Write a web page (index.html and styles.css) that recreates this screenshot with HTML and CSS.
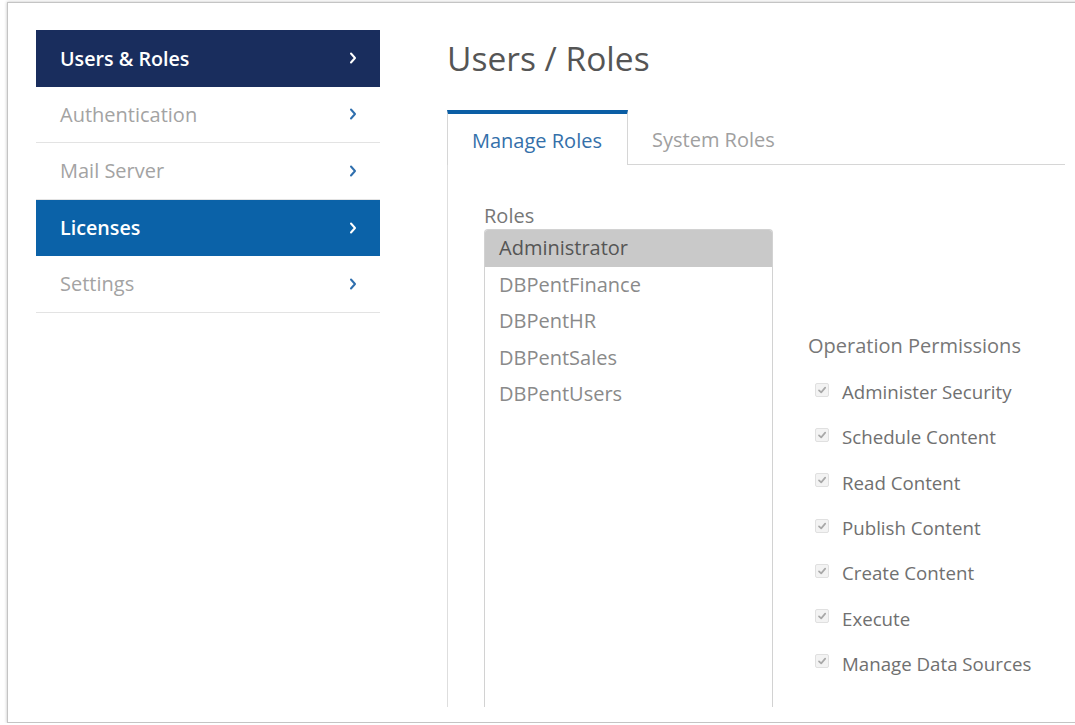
FILE: index.html
```html
<!DOCTYPE html>
<html lang="en">
<head>
<meta charset="utf-8">
<title>Users / Roles</title>
<link rel="stylesheet" href="styles.css">
</head>
<body>
<div class="frame">
  <nav class="sidebar">
    <a class="nav-item nav-dark">Users &amp; Roles<svg class="chev" viewBox="0 0 8 12"><path d="M2 1.5 L6 6 L2 10.5"/></svg></a>
    <a class="nav-item">Authentication<svg class="chev" viewBox="0 0 8 12"><path d="M2 1.5 L6 6 L2 10.5"/></svg></a>
    <a class="nav-item">Mail Server<svg class="chev" viewBox="0 0 8 12"><path d="M2 1.5 L6 6 L2 10.5"/></svg></a>
    <a class="nav-item nav-blue">Licenses<svg class="chev" viewBox="0 0 8 12"><path d="M2 1.5 L6 6 L2 10.5"/></svg></a>
    <a class="nav-item">Settings<svg class="chev" viewBox="0 0 8 12"><path d="M2 1.5 L6 6 L2 10.5"/></svg></a>
  </nav>

  <main class="main">
    <h1 class="title">Users / Roles</h1>

    <div class="tabs">
      <div class="tab tab-active">Manage Roles</div>
      <div class="tab">System Roles</div>
    </div>

    <div class="panel">
      <div class="roles">
        <div class="label">Roles</div>
        <ul class="listbox">
          <li class="selected">Administrator</li>
          <li>DBPentFinance</li>
          <li>DBPentHR</li>
          <li>DBPentSales</li>
          <li>DBPentUsers</li>
        </ul>
      </div>

      <div class="perms">
        <div class="label">Operation Permissions</div>
        <ul class="checks">
          <li><span class="box"><svg viewBox="0 0 12 12"><path d="M3 6.3 L5.2 8.4 L9.2 3.6"/></svg></span>Administer Security</li>
          <li><span class="box"><svg viewBox="0 0 12 12"><path d="M3 6.3 L5.2 8.4 L9.2 3.6"/></svg></span>Schedule Content</li>
          <li><span class="box"><svg viewBox="0 0 12 12"><path d="M3 6.3 L5.2 8.4 L9.2 3.6"/></svg></span>Read Content</li>
          <li><span class="box"><svg viewBox="0 0 12 12"><path d="M3 6.3 L5.2 8.4 L9.2 3.6"/></svg></span>Publish Content</li>
          <li><span class="box"><svg viewBox="0 0 12 12"><path d="M3 6.3 L5.2 8.4 L9.2 3.6"/></svg></span>Create Content</li>
          <li><span class="box"><svg viewBox="0 0 12 12"><path d="M3 6.3 L5.2 8.4 L9.2 3.6"/></svg></span>Execute</li>
          <li><span class="box"><svg viewBox="0 0 12 12"><path d="M3 6.3 L5.2 8.4 L9.2 3.6"/></svg></span>Manage Data Sources</li>
        </ul>
      </div>
    </div>
  </main>
</div>
</body>
</html>
```

FILE: styles.css
```css
* {
  box-sizing: border-box;
}

html, body {
  margin: 0;
  padding: 0;
  background: #ffffff;
  overflow: hidden;
}

body {
  font-family: "Open Sans", "Noto Sans", "Liberation Sans", sans-serif;
  color: #666;
}

/* outer window frame */
.frame {
  display: flex;
  margin: 2px 0 0 7px;
  width: 1100px;
  height: 721px;
  padding: 27px 0 0 28px;
  border: 1px solid #c4c4c4;
  border-right: none;
  box-shadow: 0 0 3px rgba(0, 0, 0, 0.25);
  overflow: hidden;
}

/* left navigation */
.sidebar {
  flex: 0 0 344px;
  display: flex;
  flex-direction: column;
}

.nav-item {
  display: flex;
  align-items: center;
  justify-content: space-between;
  height: 56.5px;
  padding: 0 22px 0 24px;
  font-size: 20px;
  color: #a3a3a3;
  border-bottom: 1px solid #e3e3e3;
}

.chev {
  width: 8px;
  height: 12px;
  fill: none;
  stroke: #2f6fae;
  stroke-width: 2;
  stroke-linecap: round;
  stroke-linejoin: round;
  margin-right: 1px;
}

.nav-dark,
.nav-blue {
  color: #ffffff;
  font-size: 19.7px;
  font-weight: 600;
  border-bottom: none;
}

.nav-dark .chev,
.nav-blue .chev {
  stroke: #ffffff;
}

.nav-dark {
  background: #192d5d;
}

.nav-blue {
  background: #0b62a8;
}

/* main column */
.main {
  flex: 0 0 auto;
  width: 618px;
  margin-left: 67px;
  padding-bottom: 15px;
  display: flex;
  flex-direction: column;
}

.title {
  margin: 0;
  height: 80px;
  font-size: 33.5px;
  font-weight: 400;
  color: #555;
  line-height: 56px;
}

.tabs {
  display: flex;
  border-bottom: 1px solid #d6d6d6;
}

.tab {
  height: 54px;
  padding: 4px 24px 0;
  display: flex;
  align-items: center;
  font-size: 20px;
  color: #a0a0a0;
}

.tab-active {
  width: 181px;
  border-top: 4px solid #0b5ea5;
  border-left: 1px solid #d6d6d6;
  border-right: 1px solid #d6d6d6;
  margin-bottom: -1px;
  height: 55px;
  padding-top: 1px;
  background: #fff;
  color: #3470aa;
}

.panel {
  flex: 1;
  display: flex;
  border-left: 1px solid #dedede;
  padding: 38px 0 0 36px;
}

.label {
  font-size: 20px;
  line-height: 26px;
  color: #777;
}

.roles {
  display: flex;
  flex-direction: column;
  width: 289px;
}

.listbox {
  flex: 1;
  list-style: none;
  margin: 0;
  padding: 0;
  border: 1px solid #d2d2d2;
  border-bottom: none;
  border-radius: 4px 4px 0 0;
}

.listbox li {
  height: 36.5px;
  line-height: 36.5px;
  padding-left: 14px;
  font-size: 20px;
  color: #8a8a8a;
}

.listbox li.selected {
  background: #c9c9c9;
  color: #555;
  border-radius: 3px 3px 0 0;
}

/* permissions list */
.perms {
  margin-left: 35px;
  padding-top: 130px;
}

.checks {
  list-style: none;
  margin: 0;
  padding: 10px 0 0 0;
}

.checks li {
  display: flex;
  align-items: center;
  height: 45.3px;
  font-size: 18.7px;
  color: #707070;
}

.box {
  display: inline-flex;
  width: 14px;
  height: 14px;
  margin: -4px 13px 0 7px;
  border: 1px solid #e0e0e0;
  border-radius: 2px;
  background: #f3f3f3;
}

.box svg {
  width: 12px;
  height: 12px;
  fill: none;
  stroke: #a8a8a8;
  stroke-width: 1.7;
  stroke-linecap: round;
  stroke-linejoin: round;
}
```
